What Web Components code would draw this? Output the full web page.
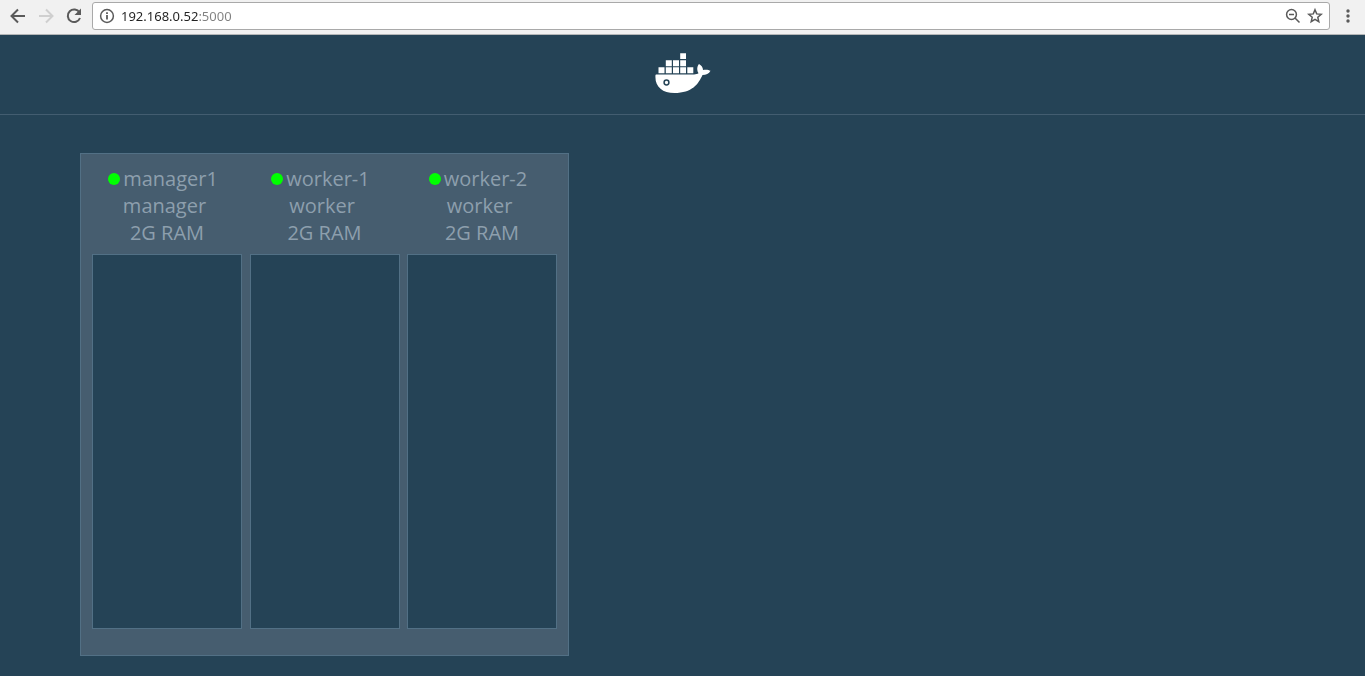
<!DOCTYPE html>
<html lang="en">
<head>
<meta charset="utf-8">
<title>Visualizer</title>
<style>
html, body { margin: 0; min-height: 100%; background: #254356; }
body { font-family: "Open Sans", sans-serif; }
</style>
</head>
<body>
<visualizer-app></visualizer-app>
<script>
const define = (name, html) => customElements.define(name, class extends HTMLElement {
  constructor() {
    super();
    this.attachShadow({ mode: "open" }).innerHTML = html;
  }
});

define("browser-bar", `
<style>
:host { display: flex; align-items: center; box-sizing: border-box; height: 35px; padding: 0 7px 2px 8px; background: #f1f1f1; border-bottom: 1px solid #b4b6b7; }
button { border: 0; padding: 0; background: none; width: 20px; height: 20px; color: #5a5a5a; flex: none; }
button svg { display: block; width: 20px; height: 20px; }
nav { display: flex; gap: 8px; margin-right: 8px; }
.off { color: #cfcfcf; }
form { flex: 1; display: flex; align-items: center; box-sizing: border-box; height: 28px; border: 1px solid #a9a9a9; border-radius: 3px; background: #fff; padding: 0 4px; gap: 2px; }
/* The host is dark and the port is grey. */
input { flex: 1; min-width: 0; border: 0; padding: 0; margin: 0 0 0 2px; outline: 0; height: 20px; font: 13px "Noto Sans", sans-serif; color: #222; -webkit-text-fill-color: transparent; background: linear-gradient(90deg, #222 77px, #808080 77px); -webkit-background-clip: text; background-clip: text; }
.menu { margin-left: 8px; margin-right: 0; }
.menu svg { width: 20px; }
</style>
<nav>
<button aria-label="Back"><svg viewBox="0 0 20 20" fill="none" stroke="currentColor" stroke-width="2"><path d="M17 10H4M10 3.500 3.500 10l6.500 6.500"/></svg></button>
<button class="off" aria-label="Forward" disabled><svg viewBox="0 0 20 20" fill="none" stroke="currentColor" stroke-width="2"><path d="M3 10h13M10 3.500 16.500 10 10 16.500"/></svg></button>
<button aria-label="Reload"><svg viewBox="0 0 20 20"><path d="M15.500 6.500A6.300 6.300 0 1 0 16 12" fill="none" stroke="currentColor" stroke-width="2"/><path d="M17 2.500V9h-6.500z" fill="currentColor"/></svg></button>
</nav>
<form>
<button type="button" aria-label="Site information"><svg viewBox="0 0 20 20"><circle cx="10" cy="10" r="6.400" fill="none" stroke="currentColor" stroke-width="1.500"/><path d="M9.100 6.200h1.800v1.800H9.100zM9.100 9h1.800v4.600H9.100z" fill="currentColor"/></svg></button>
<input type="text" aria-label="Address" value="192.168.0.52:5000" spellcheck="false">
<button type="button" aria-label="Zoom"><svg viewBox="0 0 20 20" fill="none" stroke="currentColor" stroke-width="1.500"><circle cx="8.500" cy="8.500" r="4.900"/><path d="M6 8.500h5M12 12l4.500 4.500"/></svg></button>
<button type="button" aria-label="Bookmark"><svg viewBox="0 0 20 20" fill="none" stroke="currentColor" stroke-width="1.500"><path d="m10 3.700 1.700 4.200 4.500.4-3.400 3 1 4.400-3.800-2.300-3.800 2.300 1-4.400-3.400-3 4.500-.4z"/></svg></button>
</form>
<button class="menu" aria-label="Menu"><svg viewBox="0 0 20 20" fill="currentColor"><circle cx="10" cy="5" r="1.700"/><circle cx="10" cy="10" r="1.700"/><circle cx="10" cy="15" r="1.700"/></svg></button>
`);

define("docker-header", `
<style>
:host { display: flex; justify-content: center; box-sizing: border-box; height: 80px; padding-top: 18px; border-bottom: 1px solid #435d70; }
svg { width: 56px; height: 40px; }
</style>
<svg viewBox="0 0 56 40" role="img" aria-label="Docker" fill="#fff">
<path d="M25.200.2h5.800v5.800h-5.800zM10.800 7.200h6v6h-6zM18 7.200h6v6h-6zM25.200 7.200H31v6h-5.800zM3.500 14.200h6v6h-6zM10.800 14.200h6v6h-6zM18 14.200h6v6h-6zM25.200 14.200H31v6h-5.800zM32.300 14.200h6v6h-6z"/>
<path d="M1 21.500h38c2 0 3.500-.5 4.500-1.200-2-3-1.500-6.800.5-9.300 2.500 1.300 4 3.700 4 6 2.500-.6 5.500-.5 7.500.8-1.500 3-4.500 4.200-8 4.200C43.500 31 37 40 19.500 40 7 40-.5 33.500.5 22z"/>
<circle cx="11.500" cy="29.500" r="2.400" stroke="#254356" stroke-width="1.500"/>
</svg>`);

define("swarm-node", `
<style>
:host { display: block; width: 150px; text-align: center; font-size: 20px; line-height: 27px; color: #8d9fad; }
.name { display: flex; align-items: center; justify-content: center; gap: 3px; padding-right: 8px; }
.name::before { content: ""; width: 12px; height: 12px; border-radius: 50%; background: #0f0; }
.role { padding-right: 5px; }
.tasks { box-sizing: border-box; height: 375px; margin-top: 8px; border: 1px solid #527085; background: #254356; }
</style>
<div class="name"><slot name="name"></slot></div>
<div class="role"><slot name="role"></slot></div>
<div><slot name="memory"></slot></div>
<div class="tasks"></div>`);

define("swarm-cluster", `
<style>
:host { display: flex; justify-content: space-between; box-sizing: border-box; width: 489px; padding: 11px 11px 26px; border: 1px solid #527085; background: #465d6f; }
</style><slot></slot>`);

define("visualizer-app", `
<style>
:host { display: block; }
main { padding: 38px 80px 20px; }
</style>
<browser-bar></browser-bar>
<docker-header></docker-header>
<main><swarm-cluster>
<swarm-node><span slot="name">manager1</span><span slot="role">manager</span><span slot="memory">2G RAM</span></swarm-node>
<swarm-node><span slot="name">worker-1</span><span slot="role">worker</span><span slot="memory">2G RAM</span></swarm-node>
<swarm-node><span slot="name">worker-2</span><span slot="role">worker</span><span slot="memory">2G RAM</span></swarm-node>
</swarm-cluster></main>`);
</script>
</body>
</html>
